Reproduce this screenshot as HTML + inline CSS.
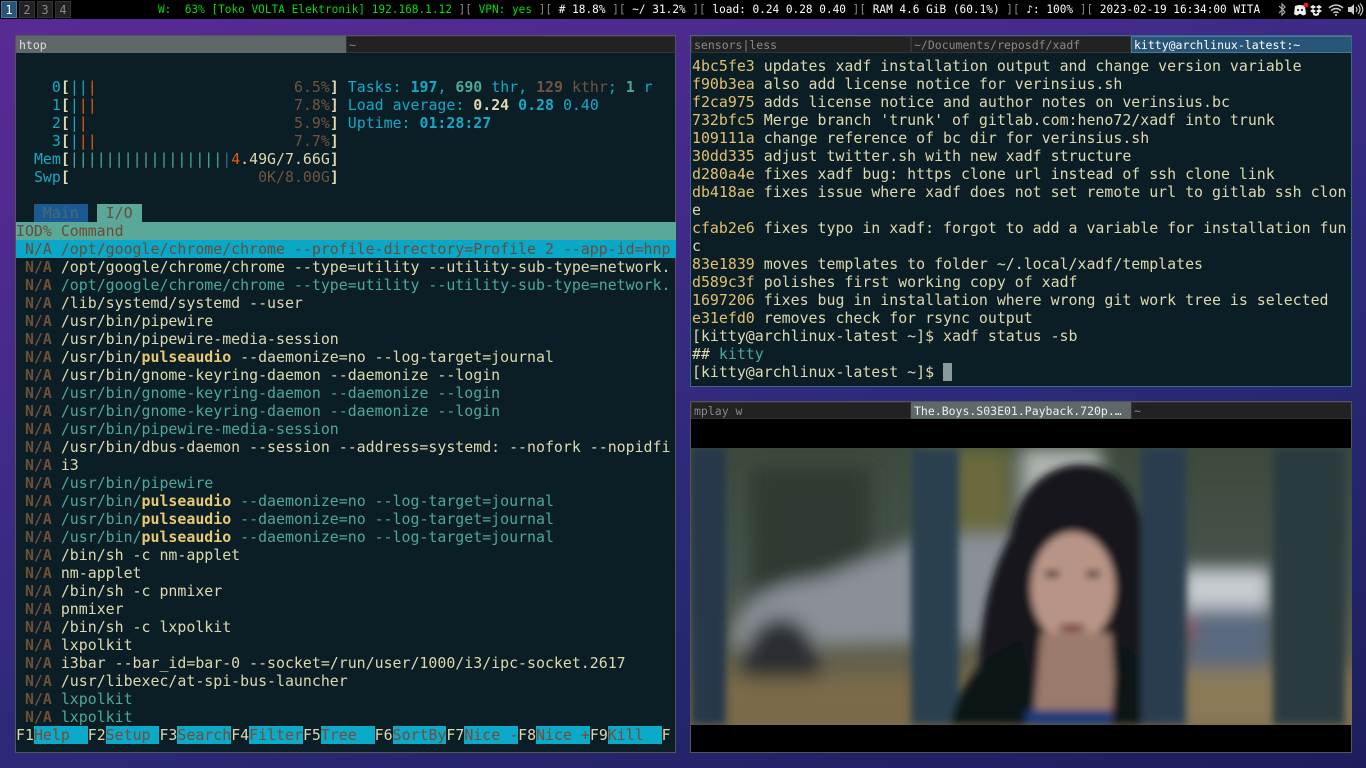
<!DOCTYPE html>
<html><head><meta charset="utf-8">
<style>
*{margin:0;padding:0;box-sizing:border-box}
html,body{width:1366px;height:768px;overflow:hidden}
body{position:relative;background:linear-gradient(160deg,#5a2a94 0%,#472a8c 30%,#2b2a78 60%,#1c1e5c 100%);font-family:"DejaVu Sans Mono","Liberation Mono",monospace}
#bar{position:absolute;left:0;top:0;width:1366px;height:19px;background:#000;color:#fff;font-size:11.1px;line-height:19px}
.ws{position:absolute;top:1px;width:16px;height:17px;text-align:center;line-height:17px;font-size:12px;color:#888;background:#222;border:1px solid #333}
.ws.a{background:#285577;border-color:#4c7899;color:#fff}
#status{position:absolute;left:158px;top:0;white-space:pre}
.g{color:#00dd00}.sep{color:#888}
.win{position:absolute;background:#0c1e25;border:1px solid #555}
.tabs{position:absolute;left:0;top:0;right:0;height:17px;background:#222;font-size:11.5px;line-height:17px;color:#888;white-space:pre;overflow:hidden}
.tab{position:absolute;top:0;height:17px;padding-left:2px;border:1px solid #333}
pre{position:absolute;font-family:"DejaVu Sans Mono",monospace;font-size:14.9px;line-height:18px;color:#dcd8b0;white-space:pre}
.c{color:#12aac8}.r{color:#e05a14}.br{color:#6e5440}.t{color:#4ea898}.b{font-weight:bold}
.y{color:#e8c870;font-weight:bold}.na{color:#6e5036;font-weight:bold}
.hd{background:#5aa898;color:#6b4c3a;display:inline-block;width:660px}
.sel{background:#0aa8c8;color:#6b4c3a;display:inline-block;width:660px}
.sel .na{color:#6b4c3a;font-weight:normal}
.fk{background:#0aaac8;color:#7a4a3a}
.h{color:#e0c070}
</style></head><body>
<div id="bar">
<div class="ws a" style="left:1px">1</div><div class="ws" style="left:19px">2</div><div class="ws" style="left:37px">3</div><div class="ws" style="left:55px">4</div>
<div id="status"><span class="g">W:  63% [Toko VOLTA Elektronik] 192.168.1.12</span><span class="sep"> ][ </span><span class="g">VPN: yes</span><span class="sep"> ][ </span># 18.8%<span class="sep"> ][ </span>~/ 31.2%<span class="sep"> ][ </span>load: 0.24 0.28 0.40<span class="sep"> ][ </span>RAM 4.6 GiB (60.1%)<span class="sep"> ][ </span>♪: 100%<span class="sep"> ][ </span>2023-02-19 16:34:00 WITA</div>
<svg style="position:absolute;left:1276px;top:2px" width="90" height="15" viewBox="0 0 90 15">
<path d="M3 4l6 6-3 3V2l3 3-6 6" stroke="#aaa" fill="none" stroke-width="1.2"/>
<path d="M19 4q5-2 10 0l1 8q-2 2-4 1l-1-1h-2l-1 1q-2 1-4-1z" fill="#eee"/><circle cx="22" cy="8" r="1" fill="#000"/><circle cx="26" cy="8" r="1" fill="#000"/><circle cx="30" cy="3" r="2.5" fill="#e02020"/>
<path d="M37 3l3 2-3 2-3-2zM43 3l3 2-3 2-3-2zM37 7l3 2 3-2 3 2-3 2-3-2-3 2-3-2zM40 12l3-2v3l-3 1-3-1v-3z" fill="#eee"/>
<path d="M53 6q7-6 14 0M55 8.5q5-4 10 0M57.5 11q2.5-2 5 0" stroke="#ccc" fill="none" stroke-width="1.4"/><circle cx="60" cy="13" r="1" fill="#ccc"/>
<path d="M72 5h3l3-3v11l-3-3h-3z" fill="#ccc"/><path d="M80 5q2 2.5 0 5M82 3q4 4.5 0 9M84 1.5q5.5 6 0 12" stroke="#ccc" fill="none" stroke-width="1.1"/>
</svg>
</div>

<div class="win" style="left:15px;top:35px;width:661px;height:718px">
<div class="tabs"><div class="tab" style="left:0;width:330px;background:#5f6868;color:#ddd;border-color:#5f6868">htop</div><div class="tab" style="left:330px;width:330px">~</div></div>
<pre style="left:0;top:24px">

    <span class="c">0</span><span class="b">[</span><span class="c">||</span><span class="r">|</span>                      <span class="br">6.5%</span><span class="b">]</span> <span class="c">Tasks: </span><span class="c b">197</span><span class="c">, </span><span class="t b">690</span><span class="c"> thr, </span><span class="br b">129</span><span class="br"> kthr</span><span class="c">; </span><span class="t b">1</span><span class="c"> r</span>
    <span class="c">1</span><span class="b">[</span><span class="c">|</span><span class="r">||</span>                      <span class="br">7.8%</span><span class="b">]</span> <span class="c">Load average: </span><b>0.24</b> <span class="c b">0.28</span> <span class="c">0.40</span>
    <span class="c">2</span><span class="b">[</span><span class="c">|</span><span class="r">|</span>                       <span class="br">5.9%</span><span class="b">]</span> <span class="c">Uptime: </span><span class="c b">01:28:27</span>
    <span class="c">3</span><span class="b">[</span><span class="c">|</span><span class="r">||</span>                      <span class="br">7.7%</span><span class="b">]</span>
  <span class="c">Mem</span><span class="b">[</span><span class="t">|||||||||||||||||</span><span style="color:#2070a0">|</span><span class="r">4</span>.49G/7.66G<span class="b">]</span>
  <span class="c">Swp</span><span class="b">[</span>                     <span class="br">0K/8.00G</span><span class="b">]</span>

  <span style="background:#1a5a90;color:#4a6a7a"> Main </span> <span style="background:#5aa898;color:#6b4c3a"> I/O </span>
<span class="hd">IOD% Command</span>
<span class="sel"> <span class="na">N/A</span> /opt/google/chrome/chrome --profile-directory=Profile 2 --app-id=hnp</span>
 <span class="na">N/A</span> /opt/google/chrome/chrome --type=utility --utility-sub-type=network.
 <span class="na">N/A</span> <span class="t">/opt/google/chrome/chrome --type=utility --utility-sub-type=network.</span>
 <span class="na">N/A</span> /lib/systemd/systemd --user
 <span class="na">N/A</span> /usr/bin/pipewire
 <span class="na">N/A</span> /usr/bin/pipewire-media-session
 <span class="na">N/A</span> /usr/bin/<span class="y">pulseaudio</span> --daemonize=no --log-target=journal
 <span class="na">N/A</span> /usr/bin/gnome-keyring-daemon --daemonize --login
 <span class="na">N/A</span> <span class="t">/usr/bin/gnome-keyring-daemon --daemonize --login</span>
 <span class="na">N/A</span> <span class="t">/usr/bin/gnome-keyring-daemon --daemonize --login</span>
 <span class="na">N/A</span> <span class="t">/usr/bin/pipewire-media-session</span>
 <span class="na">N/A</span> /usr/bin/dbus-daemon --session --address=systemd: --nofork --nopidfi
 <span class="na">N/A</span> i3
 <span class="na">N/A</span> <span class="t">/usr/bin/pipewire</span>
 <span class="na">N/A</span> <span class="t">/usr/bin/</span><span class="y">pulseaudio</span><span class="t"> --daemonize=no --log-target=journal</span>
 <span class="na">N/A</span> <span class="t">/usr/bin/</span><span class="y">pulseaudio</span><span class="t"> --daemonize=no --log-target=journal</span>
 <span class="na">N/A</span> <span class="t">/usr/bin/</span><span class="y">pulseaudio</span><span class="t"> --daemonize=no --log-target=journal</span>
 <span class="na">N/A</span> /bin/sh -c nm-applet
 <span class="na">N/A</span> nm-applet
 <span class="na">N/A</span> /bin/sh -c pnmixer
 <span class="na">N/A</span> pnmixer
 <span class="na">N/A</span> /bin/sh -c lxpolkit
 <span class="na">N/A</span> lxpolkit
 <span class="na">N/A</span> i3bar --bar_id=bar-0 --socket=/run/user/1000/i3/ipc-socket.2617
 <span class="na">N/A</span> /usr/libexec/at-spi-bus-launcher
 <span class="na">N/A</span> <span class="t">lxpolkit</span>
 <span class="na">N/A</span> <span class="t">lxpolkit</span>
F1<span class="fk">Help  </span>F2<span class="fk">Setup </span>F3<span class="fk">Search</span>F4<span class="fk">Filter</span>F5<span class="fk">Tree  </span>F6<span class="fk">SortBy</span>F7<span class="fk">Nice -</span>F8<span class="fk">Nice +</span>F9<span class="fk">Kill  </span>F</pre>
</div>

<div class="win" style="left:690px;top:35px;width:662px;height:352px;border-color:#3a6a8a">
<div class="tabs"><div class="tab" style="left:0;width:220px">sensors|less</div><div class="tab" style="left:220px;width:220px">~/Documents/reposdf/xadf</div><div class="tab" style="left:440px;width:221px;background:#285577;color:#fff;border-color:#4c7899">kitty@archlinux-latest:~</div></div>
<pre style="left:1px;top:21px"><span class="h">4bc5fe3</span> updates xadf installation output and change version variable
<span class="h">f90b3ea</span> also add license notice for verinsius.sh
<span class="h">f2ca975</span> adds license notice and author notes on verinsius.bc
<span class="h">732bfc5</span> Merge branch 'trunk' of gitlab.com:heno72/xadf into trunk
<span class="h">109111a</span> change reference of bc dir for verinsius.sh
<span class="h">30dd335</span> adjust twitter.sh with new xadf structure
<span class="h">d280a4e</span> fixes xadf bug: https clone url instead of ssh clone link
<span class="h">db418ae</span> fixes issue where xadf does not set remote url to gitlab ssh clon
e
<span class="h">cfab2e6</span> fixes typo in xadf: forgot to add a variable for installation fun
c
<span class="h">83e1839</span> moves templates to folder ~/.local/xadf/templates
<span class="h">d589c3f</span> polishes first working copy of xadf
<span class="h">1697206</span> fixes bug in installation where wrong git work tree is selected
<span class="h">e31efd0</span> removes check for rsync output
[kitty@archlinux-latest ~]$ xadf status -sb
## <span class="t">kitty</span>
[kitty@archlinux-latest ~]$ <span style="background:#8a9a9a"> </span></pre>
</div>

<div class="win" style="left:690px;top:401px;width:662px;height:352px;background:#000;border-color:#555">
<div class="tabs"><div class="tab" style="left:0;width:220px">mplay w</div><div class="tab" style="left:220px;width:220px;background:#5f6868;color:#eee;border-color:#5f6868">The.Boys.S03E01.Payback.720p.…</div><div class="tab" style="left:440px;width:221px">~</div></div>
<svg style="position:absolute;left:0;top:46px" width="661" height="277" viewBox="0 0 661 277">
<defs>
<filter id="bl" x="-20%" y="-20%" width="140%" height="140%"><feGaussianBlur stdDeviation="9"/></filter>
<filter id="bs"><feGaussianBlur stdDeviation="4"/></filter>
<linearGradient id="bg" x1="0" y1="0" x2="0" y2="1"><stop offset="0" stop-color="#3c4a3c"/><stop offset="0.5" stop-color="#46544e"/><stop offset="1" stop-color="#7a6a48"/></linearGradient>
</defs>
<rect width="661" height="277" fill="url(#bg)"/>
<g filter="url(#bl)">
<rect x="230" y="0" width="90" height="150" fill="#6a6a3c"/>
<rect x="60" y="20" width="120" height="150" fill="#2e3a30"/>
<rect x="330" y="0" width="80" height="80" fill="#b0b4b0"/>
<path d="M40 200q0-60 90-70l100-40q100-10 170 10l0 90-360 10z" fill="#8a9096"/>
<ellipse cx="90" cy="220" rx="38" ry="50" fill="#2a2e30"/>
<rect x="490" y="120" width="90" height="50" fill="#c8ccd0"/>
<rect x="495" y="160" width="85" height="60" fill="#5a6a80"/>
<rect x="490" y="170" width="12" height="20" fill="#a04040"/>
<rect x="470" y="220" width="191" height="57" fill="#8a7a58"/>
<rect x="0" y="230" width="300" height="47" fill="#7a6a48"/>
</g>
<g filter="url(#bs)">
<rect x="0" y="0" width="35" height="277" fill="#26384a"/>
<rect x="220" y="0" width="48" height="277" fill="#2c4050"/>
<rect x="582" y="0" width="72" height="277" fill="#2a3a40"/>
<path d="M290 277q-10-120 30-190q10-60 60-70q40-5 60 30q20 40 20 110l5 120z" fill="#12161a"/>
<ellipse cx="382" cy="140" rx="42" ry="56" fill="#b89486"/>
<path d="M350 185l-8 92h84l-6-92z" fill="#9a7a6c"/>
<path d="M260 277q10-60 70-85l10 45 0 40zM425 195q45 20 65 82h-70z" fill="#111418"/>
<rect x="335" y="262" width="85" height="15" fill="#1a3a7a"/>
<ellipse cx="361" cy="126" rx="8" ry="3.5" fill="#3a2a28"/><ellipse cx="402" cy="126" rx="8" ry="3.5" fill="#3a2a28"/>
<ellipse cx="381" cy="180" rx="14" ry="4" fill="#7a3a38"/>
<rect x="450" y="0" width="45" height="277" fill="#2a3e50"/>
</g>
</svg>
</div>
</body></html>
